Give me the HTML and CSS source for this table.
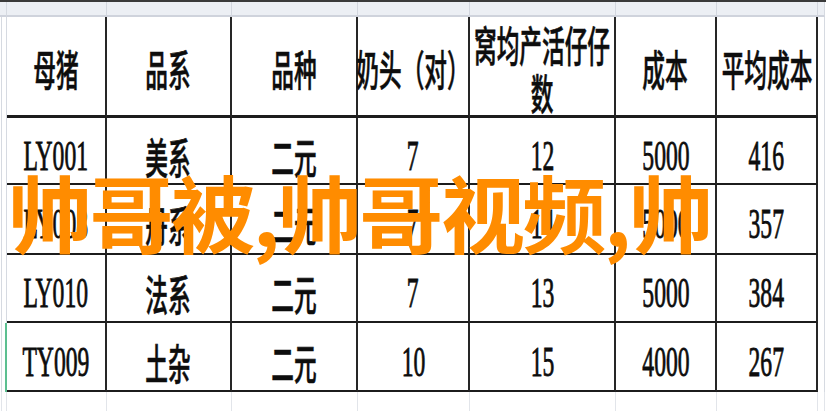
FILE: index.html
```html
<!DOCTYPE html>
<html lang="zh-CN">
<head>
<meta charset="utf-8">
<title>母猪成本表</title>
<link rel="stylesheet" href="styles.css">
</head>
<body>
<div class="sheet">
  <div class="grid">
    <div class="strip gut"></div>
    <div class="strip"></div><div class="strip"></div><div class="strip"></div><div class="strip"></div><div class="strip"></div><div class="strip"></div><div class="strip"></div>
    <div class="strip gut-r"></div>

    <div class="gut"></div>
    <div class="cell head"><span class="t cjk">母猪</span></div>
    <div class="cell head"><span class="t cjk">品系</span></div>
    <div class="cell head"><span class="t cjk">品种</span></div>
    <div class="cell head"><span class="t cjk">奶头（对）</span></div>
    <div class="cell head"><span class="t cjk two">窝均产活仔仔<br>数</span></div>
    <div class="cell head"><span class="t cjk">成本</span></div>
    <div class="cell head"><span class="t cjk">平均成本</span></div>
    <div class="gut-r"></div>

    <div class="gut"></div>
    <div class="cell"><span class="t num">LY001</span></div>
    <div class="cell"><span class="t cjk">美系</span></div>
    <div class="cell"><span class="t cjk">二元</span></div>
    <div class="cell"><span class="t num">7</span></div>
    <div class="cell"><span class="t num">12</span></div>
    <div class="cell"><span class="t num">5000</span></div>
    <div class="cell"><span class="t num">416</span></div>
    <div class="gut-r"></div>

    <div class="gut"></div>
    <div class="cell"><span class="t num">LY008</span></div>
    <div class="cell"><span class="t cjk">丹系</span></div>
    <div class="cell"><span class="t cjk">二元</span></div>
    <div class="cell"><span class="t num">7</span></div>
    <div class="cell"><span class="t num">14</span></div>
    <div class="cell"><span class="t num">5000</span></div>
    <div class="cell"><span class="t num">357</span></div>
    <div class="gut-r"></div>

    <div class="gut"></div>
    <div class="cell"><span class="t num">LY010</span></div>
    <div class="cell"><span class="t cjk">法系</span></div>
    <div class="cell"><span class="t cjk">二元</span></div>
    <div class="cell"><span class="t num">7</span></div>
    <div class="cell"><span class="t num">13</span></div>
    <div class="cell"><span class="t num">5000</span></div>
    <div class="cell"><span class="t num">384</span></div>
    <div class="gut-r"></div>

    <div class="gut sel"></div>
    <div class="cell"><span class="t num">TY009</span></div>
    <div class="cell"><span class="t cjk">土杂</span></div>
    <div class="cell"><span class="t cjk">二元</span></div>
    <div class="cell"><span class="t num">10</span></div>
    <div class="cell"><span class="t num">15</span></div>
    <div class="cell"><span class="t num">4000</span></div>
    <div class="cell"><span class="t num">267</span></div>
    <div class="gut-r"></div>

    <div class="bot gut"></div>
    <div class="bot"></div><div class="bot"></div><div class="bot"></div><div class="bot"></div><div class="bot"></div><div class="bot"></div><div class="bot"></div>
    <div class="bot gut-r"></div>
  </div>
  <div class="overlay">帅哥被,帅哥视频,帅</div>
</div>
</body>
</html>
```

FILE: styles.css
```css
* { box-sizing: border-box; }
html, body { margin: 0; padding: 0; background: #ffffff; }
.sheet {
  position: relative;
  width: 826px;
  height: 411px;
  overflow: hidden;
  border-top: 2px solid #3a3a3a;
  background: #ffffff;
}
.grid {
  display: grid;
  grid-template-columns: 7px 100px 125px 126px 112px 146px 101px 101px 1fr;
  grid-template-rows: 15px 101px 67px 70px 68px 69px 1fr;
  height: 100%;
}
.strip {
  background: #eceff4;
  border-right: 1px solid #d3d7df;
  border-bottom: 2px solid #cfd3dc;
}
.gut {
  border-left: 1px solid #d6dae1;
  border-right: 1px solid #d6dae1;
  margin-left: 1px;
}
.gut-r {
  border-right: 1px solid #d6dae1;
  margin-right: 1px;
}
.strip.gut { margin-left: 0; border-left: none; }
.gut.sel { border-right: 2px solid #5cbf90; }
.bot {
  border-right: 1px solid #e2e5ea;
}
.bot.gut { border-left: 1px solid #e2e5ea; }
.cell {
  display: flex;
  align-items: center;
  justify-content: center;
  border-right: 2px solid #262626;
  border-bottom: 2px solid #1c1c1c;
  padding-top: 10px;
  background: #ffffff;
  overflow: visible;
  min-width: 0;
}
.cell.head { padding-top: 4px; border-bottom-width: 3px; }
.t {
  display: inline-block;
  flex: none;
  white-space: nowrap;
  text-align: center;
  color: #0d0d0d;
  transform: scaleX(0.54);
  -webkit-text-stroke: 0.6px #0d0d0d;
}
.cjk {
  font-family: "Noto Sans CJK SC", sans-serif;
  font-size: 42px;
  line-height: 48px;
  font-weight: 500;
}
.num {
  font-family: "Liberation Serif", "Noto Sans CJK SC", serif;
  font-size: 43px;
  line-height: 48px;
  transform: scaleX(0.55);
  -webkit-text-stroke: 0.9px #0d0d0d;
}
.overlay {
  position: absolute;
  left: 8px;
  top: 159px;
  font-family: "Noto Sans CJK SC", sans-serif;
  font-weight: 700;
  font-size: 84px;
  line-height: 100px;
  letter-spacing: -2.4px;
  color: #ff8c00;
  white-space: nowrap;
}
```
